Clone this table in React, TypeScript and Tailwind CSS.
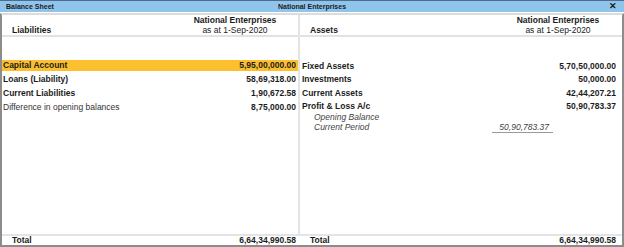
import React from "react";

const liabilities = [
  { name: "Capital Account", amount: "5,95,00,000.00", bold: true, active: true },
  { name: "Loans (Liability)", amount: "58,69,318.00", bold: true },
  { name: "Current Liabilities", amount: "1,90,672.58", bold: true },
  { name: "Difference in opening balances", amount: "8,75,000.00", bold: false },
];

const assets = [
  { name: "Fixed Assets", amount: "5,70,50,000.00" },
  { name: "Investments", amount: "50,000.00" },
  { name: "Current Assets", amount: "42,44,207.21" },
  { name: "Profit & Loss A/c", amount: "50,90,783.37" },
];

const App = () => {
  return (
    <div className="w-[624px] h-[247px] bg-white flex flex-col text-[#1c1c1c] font-['Liberation_Sans',Arial,sans-serif] overflow-hidden">
      {/* Title bar */}
      <div className="h-[12px] border-t border-[#4f6d8a] bg-[#8fc5ec] grid grid-cols-[1fr_auto_1fr] items-center px-[6px] text-[7px] font-bold leading-none">
        <span>Balance Sheet</span>
        <span>National Enterprises</span>
        <span className="text-right text-[9px] pr-[1px]">✕</span>
      </div>

      {/* Body */}
      <div className="mt-[1px] flex-1 flex flex-col border-x-2 border-b-2 border-x-[#8c8c8c] border-b-[#8c8c8c] border-t-2 border-t-[#dcdcdc]">
        <div className="flex-1 flex">
          {/* Liabilities side */}
          <div className="w-[296px] flex flex-col">
            <div className="h-[22px] flex items-end border-b-2 border-[#e2e2e2] text-[8.5px] leading-[10px]">
              <div className="flex-1 pl-[10px] font-bold">Liabilities</div>
              <div className="w-[126px] text-center">
                <div className="font-bold">National Enterprises</div>
                <div>as at 1-Sep-2020</div>
              </div>
            </div>
            <div className="pt-[23px] flex flex-col gap-[3.5px] text-[8.5px]">
              {liabilities.map((r) => (
                <div
                  key={r.name}
                  className={`h-[10.5px] flex items-center pl-[1px] pr-[2px] leading-none ${
                    r.active ? "bg-[#fcc02e]" : ""
                  }`}
                >
                  <span className={`flex-1 ${r.bold ? "font-bold" : "text-[#333]"}`}>{r.name}</span>
                  <span className="font-bold">{r.amount}</span>
                </div>
              ))}
            </div>
          </div>

          {/* Divider */}
          <div className="w-[2px] bg-[#e4e4e4]" />

          {/* Assets side */}
          <div className="flex-1 flex flex-col">
            <div className="h-[22px] flex items-end border-b-2 border-[#e2e2e2] text-[8.5px] leading-[10px] pr-[5px]">
              <div className="flex-1 pl-[10px] font-bold">Assets</div>
              <div className="w-[118px] text-center">
                <div className="font-bold">National Enterprises</div>
                <div>as at 1-Sep-2020</div>
              </div>
            </div>
            <div className="pt-[23.5px] flex flex-col text-[8.5px] pl-[2px] pr-[6px]">
              <div className="flex flex-col gap-[3px]">
                {assets.map((r) => (
                  <div key={r.name} className="h-[10.5px] flex items-center leading-none font-bold">
                    <span className="flex-1">{r.name}</span>
                    <span>{r.amount}</span>
                  </div>
                ))}
              </div>
              <div className="h-[10.5px] flex items-center leading-none italic text-[#444] pl-[12px]">
                Opening Balance
              </div>
              <div className="h-[10.5px] flex items-center leading-none italic text-[#444] pl-[12px]">
                <span className="flex-1">Current Period</span>
                <span className="w-[61px] h-full flex items-center justify-end pr-[4px] border-b border-[#9a9a9a]">
                  50,90,783.37
                </span>
                <span className="w-[63px]" />
              </div>
            </div>
          </div>
        </div>

        {/* Total row */}
        <div className="h-[11px] flex border-t-2 border-[#e4e4e4] text-[8.5px] font-bold leading-none">
          <div className="w-[296px] flex items-center pl-[10px] pr-[2px]">
            <span className="flex-1">Total</span>
            <span>6,64,34,990.58</span>
          </div>
          <div className="w-[2px]" />
          <div className="flex-1 flex items-center pl-[10px] pr-[6px]">
            <span className="flex-1">Total</span>
            <span>6,64,34,990.58</span>
          </div>
        </div>
      </div>
    </div>
  );
};

export default App;
